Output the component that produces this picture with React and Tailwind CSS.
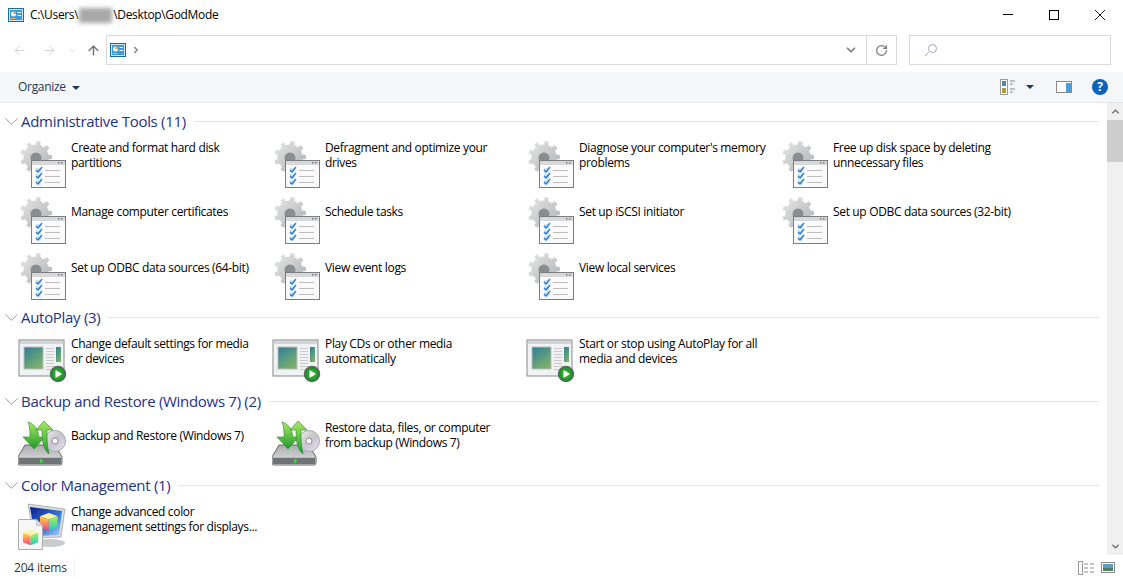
import { ChevronDown, ChevronUp, ChevronRight, ArrowLeft, ArrowRight, ArrowUp, RotateCw } from "lucide-react";

const groups = [
  {
    title: "Administrative Tools (11)",
    icon: "tool",
    items: [
      ["Create and format hard disk", "partitions"],
      ["Defragment and optimize your", "drives"],
      ["Diagnose your computer's memory", "problems"],
      ["Free up disk space by deleting", "unnecessary files"],
      ["Manage computer certificates"],
      ["Schedule tasks"],
      ["Set up iSCSI initiator"],
      ["Set up ODBC data sources (32-bit)"],
      ["Set up ODBC data sources (64-bit)"],
      ["View event logs"],
      ["View local services"],
    ],
  },
  {
    title: "AutoPlay (3)",
    icon: "play",
    items: [
      ["Change default settings for media", "or devices"],
      ["Play CDs or other media", "automatically"],
      ["Start or stop using AutoPlay for all", "media and devices"],
    ],
  },
  {
    title: "Backup and Restore (Windows 7) (2)",
    icon: "backup",
    items: [
      ["Backup and Restore (Windows 7)"],
      ["Restore data, files, or computer", "from backup (Windows 7)"],
    ],
  },
  {
    title: "Color Management (1)",
    icon: "color",
    items: [["Change advanced color", "management settings for displays..."]],
  },
];

function ControlPanelIcon() {
  return (
    <svg width="16" height="14" viewBox="0 0 16 14">
      <rect x="0.5" y="0.5" width="15" height="13" fill="#cfe6f7" stroke="#1a6aa5" />
      <rect x="2" y="2" width="12" height="10" fill="#3f9ad8" />
      <circle cx="5.5" cy="6" r="2.5" fill="#f2f6fa" />
      <path d="M5.5 6V3.5A2.5 2.5 0 0 1 8 6z" fill="#f0a030" />
      <rect x="9.5" y="4" width="3.5" height="1" fill="#fff" />
      <rect x="9.5" y="7" width="3.5" height="1" fill="#fff" />
      <rect x="2.5" y="10" width="5" height="1" fill="#f0b040" />
    </svg>
  );
}

// 9 tooth gear outline
function gearPath(cx, cy, outer, inner) {
  const teeth = 9;
  let d = "";
  for (let i = 0; i < teeth; i++) {
    const a = (i / teeth) * Math.PI * 2;
    const step = (Math.PI * 2) / teeth;
    const pts = [
      [inner, a - step * 0.5],
      [inner, a - step * 0.28],
      [outer, a - step * 0.17],
      [outer, a + step * 0.17],
      [inner, a + step * 0.28],
    ];
    pts.forEach(([r, t], j) => {
      const x = (cx + r * Math.cos(t)).toFixed(1);
      const y = (cy + r * Math.sin(t)).toFixed(1);
      d += `${i === 0 && j === 0 ? "M" : "L"}${x} ${y}`;
    });
  }
  return d + "z";
}

function ToolIcon() {
  return (
    <svg width="48" height="48" viewBox="0 0 48 48">
      <defs>
        <linearGradient id="gearFill" x1="0" y1="0" x2="1" y2="1">
          <stop offset="0" stopColor="#e8e8e8" />
          <stop offset="1" stopColor="#adafb1" />
        </linearGradient>
      </defs>
      <path d={gearPath(18, 16, 16, 12.5)} fill="url(#gearFill)" />
      <circle cx="18" cy="17" r="5.5" fill="#8b8e91" />
      <rect x="13.5" y="19.5" width="34" height="27" fill="#fafafa" stroke="#7b7d80" />
      <rect x="14" y="20" width="33" height="4" fill="#d6d8da" />
      <rect x="40" y="21" width="1.5" height="1.5" fill="#777" />
      <rect x="43" y="21" width="1.5" height="1.5" fill="#777" />
      {[27, 33, 39].map((y) => (
        <g key={y}>
          <rect x="18" y={y} width="5" height="4.5" fill="#cfe4f4" />
          <path d={`M18 ${y + 2}l2 2 4-5`} fill="none" stroke="#2a78c8" strokeWidth="1.3" />
          <rect x="27" y={y + 2} width="15" height="1" fill="#bdbdbd" />
        </g>
      ))}
    </svg>
  );
}

function PlayIcon() {
  return (
    <svg width="50" height="48" viewBox="0 0 50 48">
      <defs>
        <linearGradient id="screenFill" x1="0" y1="0" x2="0.6" y2="1">
          <stop offset="0" stopColor="#2d7d9a" />
          <stop offset="1" stopColor="#7cb06a" />
        </linearGradient>
        <radialGradient id="playBadge">
          <stop offset="0" stopColor="#4fc04a" />
          <stop offset="1" stopColor="#118a1c" />
        </radialGradient>
      </defs>
      <rect x="1" y="3" width="45" height="36" fill="#f1f2f3" stroke="#85888c" />
      <rect x="2" y="4" width="43" height="3" fill="#d3d6d9" />
      <rect x="6" y="10" width="19" height="22" fill="url(#screenFill)" stroke="#b9bcbf" />
      {[11, 14, 17, 20, 23, 26, 29, 32].map((y) => (
        <rect key={y} x="28" y={y} width="8" height="1" fill="#c9c9c9" />
      ))}
      <rect x="38" y="10" width="5" height="15" fill="url(#screenFill)" />
      <circle cx="40" cy="37" r="7.5" fill="url(#playBadge)" stroke="#5d6a60" strokeWidth="1.5" />
      <path d="M37.5 33l6.5 4-6.5 4z" fill="#fff" />
    </svg>
  );
}

function BackupIcon() {
  return (
    <svg width="48" height="48" viewBox="0 0 48 48">
      <defs>
        <linearGradient id="arrowFill" x1="0" y1="0" x2="0" y2="1">
          <stop offset="0" stopColor="#a8e862" />
          <stop offset="1" stopColor="#1f9a2b" />
        </linearGradient>
        <linearGradient id="driveTop" x1="0" y1="0" x2="0" y2="1">
          <stop offset="0" stopColor="#a9abad" />
          <stop offset="1" stopColor="#e4e5e6" />
        </linearGradient>
        <linearGradient id="cdFill" x1="0" y1="0" x2="1" y2="1">
          <stop offset="0" stopColor="#f4f4f4" />
          <stop offset="0.45" stopColor="#c8c8cc" />
          <stop offset="0.6" stopColor="#cfc6d8" />
          <stop offset="1" stopColor="#ececec" />
        </linearGradient>
      </defs>
      <path d="M0 36L7 24h30l7 12v6a2 2 0 0 1-2 2H2a2 2 0 0 1-2-2z" fill="url(#driveTop)" stroke="#66696b" />
      <rect x="1" y="36" width="42" height="7" fill="#6f7376" />
      <rect x="1" y="36" width="42" height="1" fill="#b8babb" />
      <rect x="22" y="38" width="2.5" height="4" fill="#35d840" />
      <circle cx="37" cy="20" r="10.5" fill="url(#cdFill)" stroke="#a5a8ab" />
      <circle cx="37" cy="20" r="3" fill="#fff" stroke="#8d9093" />
      <path d="M10 1c6 2 10 6 11 15h6L16 28 5 16h7C12 11 12 6 10 1z" fill="url(#arrowFill)" stroke="#2b8a2e" strokeWidth="0.6" />
      <path d="M31 33c-6-5-7-13-7-24h-6l8-9 9 9h-6c0 8 0 16 2 24z" fill="url(#arrowFill)" stroke="#2b8a2e" strokeWidth="0.6" />
    </svg>
  );
}

function RainbowCube({ x, y, s }) {
  return (
    <g transform={`translate(${x} ${y}) scale(${s})`}>
      <path d="M0 3l8-3 8 3-8 3z" fill="#fff3a0" />
      <path d="M0 3l8 3v10l-8-3z" fill="url(#cubeLeft)" />
      <path d="M16 3l-8 3v10l8-3z" fill="url(#cubeRight)" />
    </g>
  );
}

function ColorIcon() {
  return (
    <svg width="48" height="48" viewBox="0 0 48 48" className="overflow-visible">
      <defs>
        <linearGradient id="monitorFill" x1="0" y1="0" x2="1" y2="1">
          <stop offset="0" stopColor="#0b1a8c" />
          <stop offset="0.6" stopColor="#3a7ad8" />
          <stop offset="1" stopColor="#b5d8f0" />
        </linearGradient>
        <linearGradient id="cubeLeft" x1="0" y1="0" x2="0" y2="1">
          <stop offset="0" stopColor="#ffd83a" />
          <stop offset="1" stopColor="#ff3a8a" />
        </linearGradient>
        <linearGradient id="cubeRight" x1="0" y1="0" x2="0" y2="1">
          <stop offset="0" stopColor="#a8f060" />
          <stop offset="1" stopColor="#20c8c8" />
        </linearGradient>
      </defs>
      <ellipse cx="32" cy="38" rx="15" ry="4" fill="#c9cccf" />
      <path d="M10 -1l37 5-4 28-27 1z" fill="#d9dcde" stroke="#8d9093" strokeWidth="0.6" />
      <path d="M12 2l32 4-3 24-24 1z" fill="url(#monitorFill)" />
      <RainbowCube x={22} y={8} s={1.1} />
      <path d="M0.5 14.5h18l6 6v24h-24z" fill="#f6f6f6" stroke="#a9abad" />
      <path d="M18.5 14.5v6h6z" fill="#dcdcdc" stroke="#a9abad" strokeWidth="0.6" />
      <RainbowCube x={5} y={25} s={0.95} />
    </svg>
  );
}

const icons = { tool: ToolIcon, play: PlayIcon, backup: BackupIcon, color: ColorIcon };

function Item({ lines, icon }) {
  const Icon = icons[icon];
  return (
    <div className="flex h-14 pt-[5px] gap-[5px]">
      <div className="w-12 h-12 shrink-0">
        <Icon />
      </div>
      <div className="flex flex-col justify-center h-[28px] leading-[15px] whitespace-nowrap text-black">
        {lines.map((l) => (
          <div key={l}>{l}</div>
        ))}
      </div>
    </div>
  );
}

function Group({ group }) {
  return (
    <div>
      <div className="h-7 flex items-center pb-[2px]">
        <ChevronDown size={23} strokeWidth={0.7} className="text-[#6d6d6d] shrink-0" />
        <span className="-ml-[2px] text-[15px] tracking-[-0.3px] text-[#1e3287] whitespace-nowrap">{group.title}</span>
        <div className="flex-1 h-px bg-[#e5e5e5] ml-[8px]" />
      </div>
      <div className="grid grid-cols-[254px_254px_254px_254px] pl-[18px]">
        {group.items.map((lines) => (
          <Item key={lines[0]} lines={lines} icon={group.icon} />
        ))}
      </div>
    </div>
  );
}

export default function App() {
  return (
    <div className="w-[1123px] h-[579px] overflow-hidden flex flex-col bg-white text-[12px] text-black font-['Open_Sans',sans-serif] tracking-[-0.34px]">
      {/* title bar */}
      <div className="h-[30px] flex items-center shrink-0">
        <div className="pl-2 pr-[6px] flex">
          <ControlPanelIcon />
        </div>
        <span>C:\Users\</span>
        <span className="w-[33px] h-[15px] mx-[1px] bg-[#a8a8a8] blur-[2px]" />
        <span>\Desktop\GodMode</span>
        <div className="ml-auto flex">
          <div className="w-[46px] h-[30px] flex items-center justify-center">
            <svg width="10" height="10" viewBox="0 0 10 10">
              <path d="M0 4.5h10" stroke="#000" />
            </svg>
          </div>
          <div className="w-[46px] h-[30px] flex items-center justify-center">
            <svg width="10" height="10" viewBox="0 0 10 10">
              <rect x="0.5" y="0.5" width="9" height="9" fill="none" stroke="#000" />
            </svg>
          </div>
          <div className="w-[46px] h-[30px] flex items-center justify-center">
            <svg width="10" height="10" viewBox="0 0 10 10">
              <path d="M0 0l10 10M10 0L0 10" stroke="#000" strokeWidth="0.9" />
            </svg>
          </div>
        </div>
      </div>

      {/* address bar */}
      <div className="h-[42px] flex items-center shrink-0 pl-3 pb-[2px]">
        <ArrowLeft size={15} strokeWidth={1.5} className="text-[#cfcfcf]" />
        <ArrowRight size={15} strokeWidth={1.5} className="text-[#cfcfcf] ml-[15px]" />
        <ChevronDown size={9} strokeWidth={2} className="text-[#d0d0d0] ml-[11px]" />
        <ArrowUp size={15} strokeWidth={2.2} className="text-[#6f6f6f] ml-[9px]" />
        <div className="ml-[5px] w-[791px] h-[30px] border border-[#d9d9d9] flex items-center pl-[3px]">
          <ControlPanelIcon />
          <ChevronRight size={10} strokeWidth={3} className="text-[#777] ml-[5px]" />
          <div className="ml-auto w-[30px] h-full flex items-center justify-center">
            <ChevronDown size={14} strokeWidth={3} className="text-[#808080]" />
          </div>
          <div className="w-[30px] h-full border-l border-[#d9d9d9] flex items-center justify-center">
            <RotateCw size={13} strokeWidth={2.2} className="text-[#777]" />
          </div>
        </div>
        <div className="ml-3 w-[202px] h-[30px] border border-[#d9d9d9] flex items-center pl-[14px]">
          <svg width="14" height="14" viewBox="0 0 14 14" fill="none">
            <circle cx="8.5" cy="5.5" r="4" stroke="#a9a4c4" />
            <path d="M5.5 8.5L1 13" stroke="#c9a88c" />
          </svg>
        </div>
      </div>

      {/* toolbar */}
      <div className="h-[31px] bg-[#f5f6f7] border-b border-[#e8e8e8] flex items-center shrink-0 pl-[18px] text-[#1e395b] tracking-[-0.3px]">
        <span>Organize</span>
        <div className="ml-[6px] mt-[1px] w-0 h-0 border-x-[4px] border-x-transparent border-t-[4px] border-t-[#1e395b]" />
        <div className="ml-auto flex items-center">
          <svg width="16" height="16" viewBox="0 0 16 16">
            <rect x="0.5" y="0.5" width="7" height="15" fill="#fff" stroke="#9a9a9a" />
            <rect x="2" y="2" width="4" height="5" fill="#4a86b8" />
            <rect x="2" y="9" width="4" height="5" fill="#a8a040" />
            <path d="M10 2h5M10 5h3M10 10h5M10 13h3" stroke="#8a8a8a" />
          </svg>
          <div className="ml-[10px] w-0 h-0 border-x-[4px] border-x-transparent border-t-[4px] border-t-[#1e395b]" />
          <svg width="16" height="12" viewBox="0 0 16 12" className="ml-[22px]">
            <rect x="0.5" y="0.5" width="15" height="11" fill="#fff" stroke="#8a8a8a" />
            <rect x="10" y="2" width="5" height="9" fill="#4a9be0" />
          </svg>
          <div className="ml-[20px] mr-[15px] w-4 h-4 rounded-full bg-[#0f62b8] text-white text-[12px] font-bold flex items-center justify-center tracking-normal">
            ?
          </div>
        </div>
      </div>

      {/* content */}
      <div className="flex-1 flex min-h-0">
        <div className="w-[1107px] overflow-hidden pt-[5px] pr-2">
          {groups.map((g) => (
            <Group key={g.title} group={g} />
          ))}
        </div>
        <div className="w-4 bg-[#f0f0f0] flex flex-col items-center">
          <div className="h-[17px] flex items-center justify-center">
            <ChevronUp size={11} strokeWidth={3} className="text-[#606060]" />
          </div>
          <div className="w-full h-[42px] bg-[#cdcdcd]" />
          <div className="flex-1" />
          <div className="h-[17px] flex items-center justify-center">
            <ChevronDown size={11} strokeWidth={3} className="text-[#606060]" />
          </div>
        </div>
      </div>

      {/* status bar */}
      <div className="h-6 flex items-center shrink-0 pl-[14px] pt-[1px] text-[#333] tracking-[-0.2px]">
        <span className="w-[60px]">204 items</span>
        <div className="w-px h-[18px] bg-[#f0f0f0]" />
        <div className="ml-auto flex items-center pr-2">
          <svg width="16" height="14" viewBox="0 0 16 14">
            <rect x="0.5" y="0.5" width="4" height="13" fill="#fff" stroke="#9a9a9a" />
            <path d="M6 3h4M12 3h4M6 7h4M12 7h4M6 11h4M12 11h4" stroke="#8a8a8a" />
          </svg>
          <svg width="14" height="11" viewBox="0 0 14 11" className="ml-[7px]">
            <rect x="0.5" y="0.5" width="13" height="10" fill="#fff" stroke="#8a8a8a" />
            <rect x="2" y="2" width="10" height="7" fill="#5a9ec8" />
            <rect x="2" y="6" width="10" height="3" fill="#4f7f5f" />
          </svg>
        </div>
      </div>
    </div>
  );
}
